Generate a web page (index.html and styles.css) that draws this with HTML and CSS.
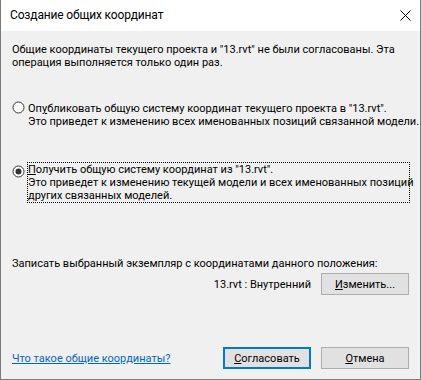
FILE: index.html
```html
<!doctype html>
<html lang="ru">
  <head>
    <meta charset="UTF-8" />
    <title>Создание общих координат</title>
    <link rel="stylesheet" href="styles.css">
  </head>
  <body>
    <div class="window">
      <div class="titlebar">
        <span class="title">Создание общих координат</span>
        <svg class="close" width="11" height="11" viewBox="0 0 11 11">
          <path d="M0.5 0.5 L10.5 10.5 M10.5 0.5 L0.5 10.5" stroke="#000" stroke-width="1" fill="none" />
        </svg>
      </div>
      <div class="content">
        <p class="intro">Общие координаты текущего проекта и "13.rvt" не были согласованы. Эта<br>операция выполняется только один раз.</p>

        <div class="option first">
          <svg class="radio" width="13" height="13" viewBox="0 0 13 13">
            <circle cx="6.5" cy="6.5" r="5.5" fill="#fff" stroke="#333" stroke-width="1" />
          </svg>
          <div class="label">Оп<u>у</u>бликовать общую систему координат текущего проекта в "13.rvt".<br>Это приведет к изменению всех именованных позиций связанной модели.</div>
        </div>

        <div class="option second">
          <svg class="radio" width="13" height="13" viewBox="0 0 13 13">
            <circle cx="6.5" cy="6.5" r="5.5" fill="#fff" stroke="#333" stroke-width="1" />
            <circle cx="6.5" cy="6.5" r="3" fill="#333" />
          </svg>
          <div class="label focused"><u>П</u>олучить общую систему координат из "13.rvt".<br>Это приведет к изменению текущей модели и всех именованных позиций<br>других связанных моделей.</div>
        </div>

        <p class="record">Записать выбранный экземпляр с координатами данного положения:</p>
        <div class="record-row">
          <span class="location">13.rvt : Внутренний</span>
          <button class="btn"><u>И</u>зменить...</button>
        </div>

        <div class="footer">
          <a class="help" href="#">Что такое общие координаты?</a>
          <button class="btn default"><u>С</u>огласовать</button>
          <button class="btn"><u>О</u>тмена</button>
        </div>
      </div>
    </div>
  </body>
</html>
```

FILE: styles.css
```css
    html,
    body {
      margin: 0;
      padding: 0;
      background: #f0f0f0;
    }
    .window {
      width: 421px;
      height: 380px;
      box-sizing: border-box;
      border: 1px solid #7a7a7a;
      border-top: none;
      display: flex;
      flex-direction: column;
      font-family: Roboto, "Liberation Sans", sans-serif;
      font-size: 11px;
      line-height: 13px;
      color: #000;
      overflow: hidden;
    }
    .titlebar {
      height: 31px;
      background: #fff;
      display: flex;
      align-items: center;
      padding: 0 9px 0 9px;
      flex-shrink: 0;
    }
    .title {
      flex: 1;
      font-size: 12px;
      letter-spacing: -0.15px;
      white-space: nowrap;
    }
    .close {
      display: block;
    }
    .content {
      flex: 1;
      background: #f0f0f0;
      padding: 12px 11px 0 11px;
      display: flex;
      flex-direction: column;
    }
    .intro,
    .record {
      margin: 0;
      white-space: nowrap;
    }
    .option {
      display: flex;
      align-items: flex-start;
      white-space: nowrap;
    }
    .option.first {
      margin-top: 32px;
    }
    .option.second {
      margin-top: 33px;
    }
    .radio {
      display: block;
      flex-shrink: 0;
      margin-top: 0;
      margin-right: 2px;
    }
    .label {
      padding: 1px 0 1px 1px;
    }
    .second .radio {
      margin-top: 3px;
    }
    .label.focused {
      border: 1px dotted #000;
      padding: 0;
      width: 381px;
    }
    .record {
      margin-top: 54px;
    }
    .record-row {
      display: flex;
      justify-content: flex-end;
      align-items: center;
      gap: 10px;
      margin-top: 3px;
    }
    .btn {
      width: 88px;
      height: 22px;
      box-sizing: border-box;
      border: 1px solid #adadad;
      background: #e1e1e1;
      font-family: inherit;
      font-size: 11px;
      color: #000;
      padding: 0;
    }
    .btn.default {
      border: 2px solid #0078d7;
    }
    .footer {
      display: flex;
      align-items: center;
      gap: 10px;
      margin-top: auto;
      margin-bottom: 10px;
    }
    .help {
      flex: 1;
      color: #0066cc;
      text-decoration: underline;
      white-space: nowrap;
    }
```
